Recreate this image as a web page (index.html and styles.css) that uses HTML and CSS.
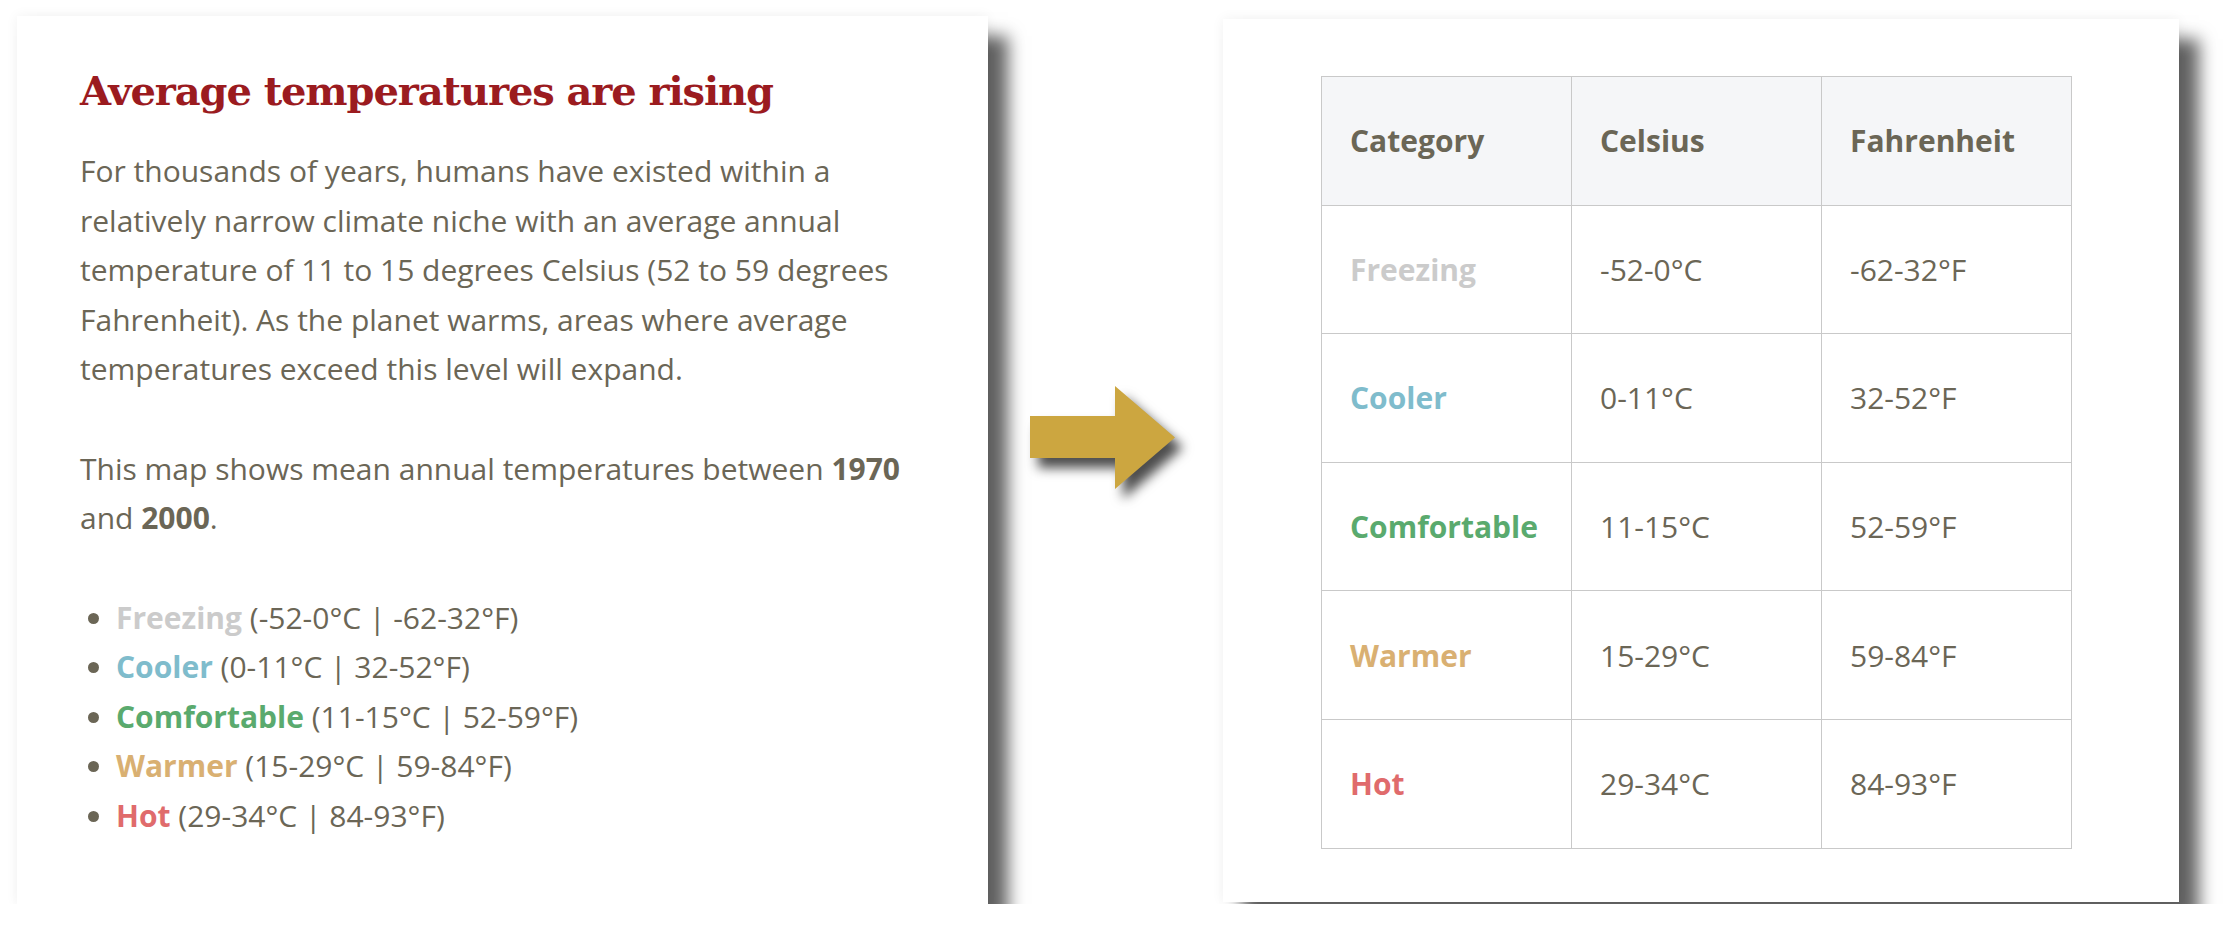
FILE: index.html
```html
<!DOCTYPE html>
<html lang="en">
<head>
<meta charset="utf-8">
<title>Average temperatures are rising</title>
<link rel="stylesheet" href="styles.css">
</head>
<body>
<main class="stage">
  <section class="card card-text">
    <h1 class="title">Average temperatures are rising</h1>
    <p class="copy">For thousands of years, humans have existed within a relatively narrow climate niche with an average annual temperature of 11 to 15 degrees Celsius (52 to 59 degrees Fahrenheit). As the planet warms, areas where average temperatures exceed this level will expand.</p>
    <p class="copy">This map shows mean annual temperatures between <strong>1970</strong> and <strong>2000</strong>.</p>
    <ul class="legend">
      <li><span class="cat freezing">Freezing</span> (-52-0°C | -62-32°F)</li>
      <li><span class="cat cooler">Cooler</span> (0-11°C | 32-52°F)</li>
      <li><span class="cat comfortable">Comfortable</span> (11-15°C | 52-59°F)</li>
      <li><span class="cat warmer">Warmer</span> (15-29°C | 59-84°F)</li>
      <li><span class="cat hot">Hot</span> (29-34°C | 84-93°F)</li>
    </ul>
  </section>

  <div class="arrow">
    <svg width="145" height="103" viewBox="0 0 145 103" aria-hidden="true">
      <polygon points="0,30 85,30 85,0 145,51.5 85,103 85,72 0,72" fill="#cca640"/>
    </svg>
  </div>

  <section class="card card-table">
    <table class="temps">
      <thead>
        <tr><th>Category</th><th>Celsius</th><th>Fahrenheit</th></tr>
      </thead>
      <tbody>
        <tr><td class="cat freezing">Freezing</td><td>-52-0°C</td><td>-62-32°F</td></tr>
        <tr><td class="cat cooler">Cooler</td><td>0-11°C</td><td>32-52°F</td></tr>
        <tr><td class="cat comfortable">Comfortable</td><td>11-15°C</td><td>52-59°F</td></tr>
        <tr><td class="cat warmer">Warmer</td><td>15-29°C</td><td>59-84°F</td></tr>
        <tr><td class="cat hot">Hot</td><td>29-34°C</td><td>84-93°F</td></tr>
      </tbody>
    </table>
  </section>
</main>
</body>
</html>
```

FILE: styles.css
```css
html, body {
  margin: 0;
  padding: 0;
  background: #ffffff;
}

body {
  font-family: "Open Sans", "Noto Sans", sans-serif;
  color: #6b6656;
}

.stage {
  display: flex;
  align-items: flex-start;
  padding: 16px 0 0 17px;
}

.card {
  background: #ffffff;
  box-sizing: border-box;
  box-shadow: 20px 20px 16px rgba(0, 0, 0, 0.62), 0 0 12px rgba(0, 0, 0, 0.06);
  flex: none;
}

.card-text {
  width: 971px;
  height: 888px;
  padding: 51px 80px 0 63px;
}

.title {
  margin: 0 0 31px;
  font-family: "DejaVu Serif", "Liberation Serif", serif;
  font-weight: bold;
  font-size: 40px;
  line-height: 48px;
  color: #9b1b1f;
  letter-spacing: -1.1px;
}

.copy {
  margin: 0 0 50px;
  font-size: 30px;
  line-height: 49.5px;
}

.copy strong {
  font-weight: 700;
}

.legend {
  margin: 47px 0 0;
  padding: 0 0 0 36px;
  font-size: 30px;
  line-height: 49.6px;
}

.legend .cat {
  font-weight: 700;
}

.cat.freezing { color: #cbcbcb; }
.cat.cooler { color: #7fbccc; }
.cat.comfortable { color: #5aaa6e; }
.cat.warmer { color: #d9b072; }
.cat.hot { color: #e06b6c; }

.arrow {
  flex: none;
  margin: 370px 48px 0 42px;
  line-height: 0;
}

.arrow svg {
  display: block;
  overflow: visible;
  filter: drop-shadow(8px 10px 6px rgba(0, 0, 0, 0.7));
}

.card-table {
  margin-top: 3px;
  width: 956px;
  height: 883px;
  padding: 57px 0 0 98px;
}

.temps {
  width: 751px;
  table-layout: fixed;
  border-collapse: collapse;
  font-size: 30px;
}

.temps th,
.temps td {
  width: 250px;
  height: 128.6px;
  padding: 0 0 0 28px;
  border: 1px solid #c9c9c9;
  text-align: left;
  vertical-align: middle;
  box-sizing: border-box;
}

.temps th {
  background: #f5f6f8;
  font-weight: 700;
  color: #6b6656;
}

.temps td {
  font-weight: 400;
}

.temps td.cat {
  font-weight: 700;
}
```
